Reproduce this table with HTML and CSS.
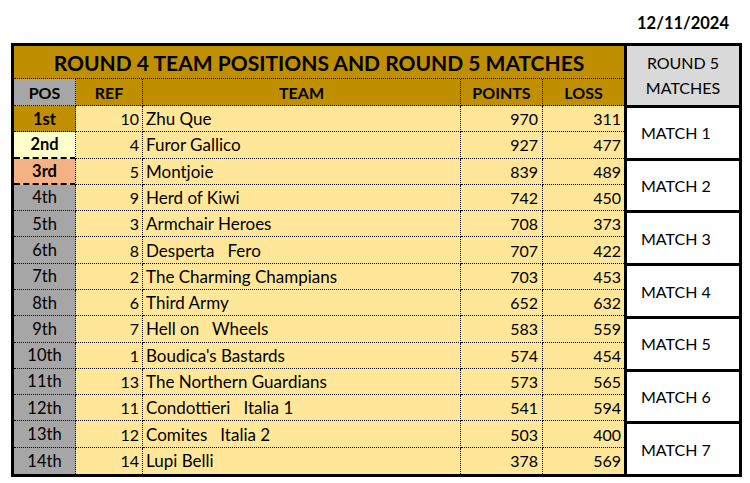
FILE: index.html
```html
<!DOCTYPE html>
<html>
<head>
<meta charset="utf-8">
<link rel="stylesheet" href="styles.css">
</head>
<body>
<div class="page">
  <div class="date-row"><span class="date">12/11/2024</span></div>
  <div class="sheet">
    <div class="standings">
      <div class="title">ROUND 4 TEAM POSITIONS AND ROUND 5 MATCHES</div>
      <div class="hd hd-pos">POS</div>
      <div class="hd">REF</div>
      <div class="hd">TEAM</div>
      <div class="hd">POINTS</div>
      <div class="hd last">LOSS</div>

      <div class="c pos first">1st</div><div class="c num">10</div><div class="c team">Zhu Que</div><div class="c num pts">970</div><div class="c num loss">311</div>
      <div class="c pos second">2nd</div><div class="c num">4</div><div class="c team">Furor Gallico</div><div class="c num pts">927</div><div class="c num loss">477</div>
      <div class="c pos third">3rd</div><div class="c num">5</div><div class="c team">Montjoie</div><div class="c num pts">839</div><div class="c num loss">489</div>
      <div class="c pos">4th</div><div class="c num">9</div><div class="c team">Herd of Kiwi</div><div class="c num pts">742</div><div class="c num loss">450</div>
      <div class="c pos">5th</div><div class="c num">3</div><div class="c team">Armchair Heroes</div><div class="c num pts">708</div><div class="c num loss">373</div>
      <div class="c pos">6th</div><div class="c num">8</div><div class="c team">Desperta&nbsp;&nbsp;&nbsp;Fero</div><div class="c num pts">707</div><div class="c num loss">422</div>
      <div class="c pos">7th</div><div class="c num">2</div><div class="c team">The Charming Champians</div><div class="c num pts">703</div><div class="c num loss">453</div>
      <div class="c pos">8th</div><div class="c num">6</div><div class="c team">Third Army</div><div class="c num pts">652</div><div class="c num loss">632</div>
      <div class="c pos">9th</div><div class="c num">7</div><div class="c team">Hell on&nbsp;&nbsp;&nbsp;Wheels</div><div class="c num pts">583</div><div class="c num loss">559</div>
      <div class="c pos">10th</div><div class="c num">1</div><div class="c team">Boudica's Bastards</div><div class="c num pts">574</div><div class="c num loss">454</div>
      <div class="c pos">11th</div><div class="c num">13</div><div class="c team">The Northern Guardians</div><div class="c num pts">573</div><div class="c num loss">565</div>
      <div class="c pos">12th</div><div class="c num">11</div><div class="c team">Condottieri&nbsp;&nbsp;&nbsp;Italia 1</div><div class="c num pts">541</div><div class="c num loss">594</div>
      <div class="c pos">13th</div><div class="c num">12</div><div class="c team">Comites&nbsp;&nbsp;&nbsp;Italia 2</div><div class="c num pts">503</div><div class="c num loss">400</div>
      <div class="c pos lr">14th</div><div class="c num lr">14</div><div class="c team lr">Lupi Belli</div><div class="c num pts lr">378</div><div class="c num loss lr">569</div>
    </div>
    <div class="matches">
      <div class="m-head">ROUND 5<br>MATCHES</div>
      <div class="match">MATCH 1</div>
      <div class="match">MATCH 2</div>
      <div class="match">MATCH 3</div>
      <div class="match">MATCH 4</div>
      <div class="match">MATCH 5</div>
      <div class="match">MATCH 6</div>
      <div class="match">MATCH 7</div>
    </div>
  </div>
</div>
</body>
</html>
```

FILE: styles.css
```css
* { box-sizing: border-box; }
html, body { margin: 0; padding: 0; background: #ffffff; }
body { font-family: Lato, "Open Sans", sans-serif; color: #000; }

.page { width: 750px; height: 483px; position: relative; }

.date-row {
  height: 43px;
  display: flex;
  justify-content: flex-end;
  align-items: flex-start;
  padding: 13px 21px 0 0;
}
.date { font-weight: 700; font-size: 16.5px; line-height: 20px; }

.sheet {
  margin-left: 11px;
  width: 731px;
  height: 434px;
  border: 3px solid #000;
  display: flex;
}

.standings {
  width: 610px;
  display: grid;
  grid-template-columns: 62px 67px 318px 82px 81px;
  grid-template-rows: 33px 27px repeat(14, 1fr);
}

.title {
  grid-column: 1 / 6;
  background: #bf8f00;
  font-weight: 700;
  font-size: 21px;
  display: flex;
  align-items: center;
  justify-content: center;
  border-bottom: 1px dotted #000;
  padding-top: 1px;
}

.hd {
  background: #bf8f00;
  font-weight: 700;
  font-size: 16px;
  display: flex;
  align-items: center;
  justify-content: center;
  border-right: 1px dotted #000;
  border-bottom: 1px dotted #000;
}
.hd-pos { background: #a6a6a6; }
.hd.last { border-right: none; }

.c {
  background: #ffe699;
  font-size: 16px;
  display: flex;
  align-items: center;
  border-right: 1px dotted #000;
  border-bottom: 1px dotted #000;
  white-space: nowrap;
}
.c.lr { border-bottom: none; }
.pos { background: #a6a6a6; justify-content: center; font-size: 16.5px; }
.pos.first { background: #bf8f00; font-weight: 700; }
.pos.second { background: #ffffcc; font-weight: 700; border-bottom: 2px dashed #000; }
.pos.third { background: #f4b183; font-weight: 700; border-bottom: 2px dashed #000; }
.num { justify-content: flex-end; padding-right: 3px; }
.pts { padding-right: 4px; }
.loss { border-right: none; padding-right: 3px; }
.team { padding-left: 3px; font-size: 17px; }

.matches {
  width: 115px;
  border-left: 3px solid #000;
  display: flex;
  flex-direction: column;
}
.m-head {
  height: 59px;
  flex: none;
  background: #d9d9d9;
  font-size: 16px;
  line-height: 25px;
  text-align: center;
  padding-top: 4px;
}
.match {
  flex: 1;
  border-top: 3px solid #000;
  background: #fff;
  font-size: 16px;
  display: flex;
  align-items: center;
  padding-left: 14px;
}
```
